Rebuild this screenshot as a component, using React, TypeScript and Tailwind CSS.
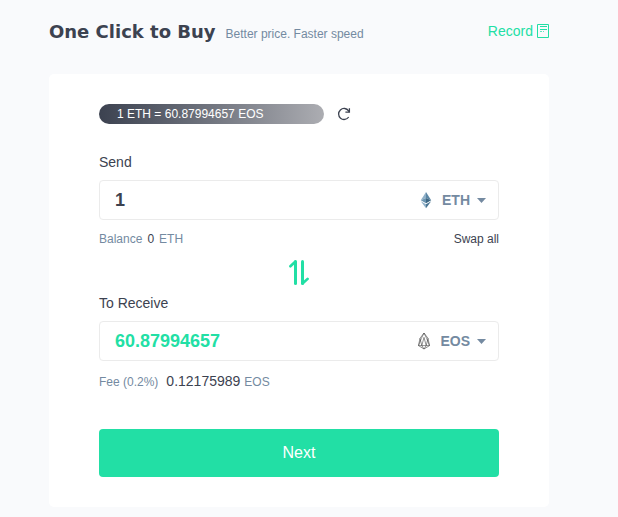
import { useState } from "react";

const RATE = 60.87994657;
const TOKENS = ["ETH", "EOS"];

export default function App() {
  const [amount, setAmount] = useState("1");
  const [from, setFrom] = useState("ETH");
  const [to, setTo] = useState("EOS");

  const received = (Number(amount) || 0) * RATE;

  const swap = () => {
    setFrom(to);
    setTo(from);
  };

  return (
    <div className="min-h-screen bg-[#f9fafc] pt-4 pr-[69px] pb-[10px] pl-[49px] font-['Liberation_Sans',Arial,sans-serif] text-[#3c4250]">
      <header className="flex items-center justify-between">
        <div className="flex items-baseline gap-[10px]">
          <h1 className="font-['DejaVu_Sans',sans-serif] text-lg leading-8 font-bold">One Click to Buy</h1>
          <p className="text-xs text-[#748aa1]">Better price. Faster speed</p>
        </div>
        <a href="#record" className="flex items-center gap-1 pb-[2px] text-sm text-[#22dfa5]">
          Record
          <RecordIcon />
        </a>
      </header>

      <main className="mt-[26px] rounded-[5px] bg-white px-[50px] py-[30px]">
        <div className="flex items-center gap-[13px]">
          <div className="w-[225px] rounded-full bg-linear-to-r from-[#3c4250] to-[#acadb2] px-[18px] text-xs leading-5 text-white">
            1 {from} = {RATE} {to}
          </div>
          <button type="button" aria-label="Refresh rate">
            <RefreshIcon />
          </button>
        </div>

        <label htmlFor="send" className="mt-7 block text-sm">
          Send
        </label>
        <div className="mt-2 flex h-10 items-center rounded border border-[#ebebeb] pr-3 pl-[15px]">
          <input
            id="send"
            type="text"
            inputMode="decimal"
            value={amount}
            onChange={(e) => setAmount(e.target.value)}
            className="min-w-0 flex-1 text-lg font-bold outline-none"
          />
          <TokenSelect label="Token to send" value={from} onChange={setFrom} />
        </div>

        <div className="mt-[9px] flex items-center justify-between text-xs leading-5">
          <div className="flex gap-[5px] text-[#748aa1]">
            <span>Balance</span>
            <span className="text-[#3c4250]">0</span>
            <span>{from}</span>
          </div>
          <button type="button">Swap all</button>
        </div>

        <div className="mt-[11px] flex justify-center">
          <button type="button" aria-label="Switch tokens" onClick={swap}>
            <SwapIcon />
          </button>
        </div>

        <label htmlFor="receive" className="mt-2 block text-sm">
          To Receive
        </label>
        <div className="mt-2 flex h-10 items-center rounded border border-[#ebebeb] pr-3 pl-[15px]">
          <input
            id="receive"
            type="text"
            readOnly
            value={received.toFixed(8)}
            className="min-w-0 flex-1 text-lg font-bold text-[#22dfa5] outline-none"
          />
          <TokenSelect label="Token to receive" value={to} onChange={setTo} />
        </div>

        <div className="mt-[10px] flex items-baseline text-xs leading-5 text-[#748aa1]">
          <span>Fee (0.2%)</span>
          <span className="ml-2 text-sm text-[#3c4250]">{(Math.floor(received * 0.002 * 1e8) / 1e8).toFixed(8)}</span>
          <span className="ml-1">{to}</span>
        </div>

        <button type="button" className="mt-[37px] h-12 w-full rounded bg-[#22dfa5] text-base text-white">
          Next
        </button>
      </main>
    </div>
  );
}

function TokenSelect({
  label,
  value,
  onChange,
}: {
  label: string;
  value: string;
  onChange: (value: string) => void;
}) {
  return (
    <div className="flex items-center">
      {value === "ETH" ? <EthIcon /> : <EosIcon />}
      <select
        aria-label={label}
        value={value}
        onChange={(e) => onChange(e.target.value)}
        className="mr-[7px] ml-2 appearance-none text-sm font-bold text-[#748aa1] outline-none [field-sizing:content]"
      >
        {TOKENS.map((token) => (
          <option key={token} value={token}>
            {token}
          </option>
        ))}
      </select>
      <svg width="9" height="5" viewBox="0 0 9 5" fill="#748aa1" aria-hidden="true">
        <path d="M0 0h9L4.5 5z" />
      </svg>
    </div>
  );
}

function RecordIcon() {
  return (
    <svg width="12" height="14" viewBox="0 0 12 14" fill="none" stroke="#22dfa5" aria-hidden="true">
      <path d="M.5.5h11v13H.5zM3 2.5h7M3 5.5h7" />
      <path d="M3 7.5h2M6 7.5h1" opacity=".7" />
    </svg>
  );
}

function RefreshIcon() {
  return (
    <svg width="14" height="14" viewBox="0 0 14 14" fill="none" stroke="#3c4250" strokeWidth="1.3" aria-hidden="true">
      <path d="M11.7 10A5.5 5.5 0 1 1 11.6 3.8L12.3 5" />
      <path d="M12.4 1.2V5.2H8.4" />
    </svg>
  );
}

function SwapIcon() {
  return (
    <svg
      width="20"
      height="25"
      viewBox="0 0 20 25"
      fill="none"
      stroke="#22dfa5"
      strokeWidth="3"
      strokeLinecap="round"
      strokeLinejoin="round"
      aria-hidden="true"
    >
      <path d="M6.5 23.5v-22" />
      <path d="M6.2 1.7L1.4 6.3" strokeWidth="2.6" />
      <path d="M13.5 1.5v22" />
      <path d="M13.8 23.3l4.8-4.4" strokeWidth="2.6" />
    </svg>
  );
}

function EthIcon() {
  return (
    <svg width="16" height="18" viewBox="0 0 16 18" aria-hidden="true">
      <path d="M8 1L2.8 9.2 8 7z" fill="#8fb0c8" />
      <path d="M8 1l5.2 8.2L8 7z" fill="#5c87a5" />
      <path d="M8 7L2.8 9.2 8 12.2z" fill="#6a94b0" />
      <path d="M8 7l5.2 2.2L8 12.2z" fill="#3d6784" />
      <path d="M2.8 10.2L8 13.2V17.2z" fill="#8fb0c8" />
      <path d="M13.2 10.2L8 13.2V17.2z" fill="#4a7593" />
    </svg>
  );
}

function EosIcon() {
  return (
    <svg
      width="16"
      height="18"
      viewBox="0 0 16 18"
      fill="none"
      stroke="#444"
      strokeWidth=".6"
      strokeLinejoin="round"
      aria-hidden="true"
    >
      <path d="M8 1L4 6.3 2.5 13.6 8 17l5.5-3.4L12 6.3z" />
      <path d="M8 1L5.4 6.3 2.5 13.6M8 1l2.6 5.3 2.9 7.3" />
      <path d="M4 6.3l1.8 7.3L8 17l2.2-3.4L12 6.3" />
      <path d="M8 5.4l-2.2 8.2h4.4zM2.5 13.6h3.3M10.2 13.6h3.3" />
    </svg>
  );
}
